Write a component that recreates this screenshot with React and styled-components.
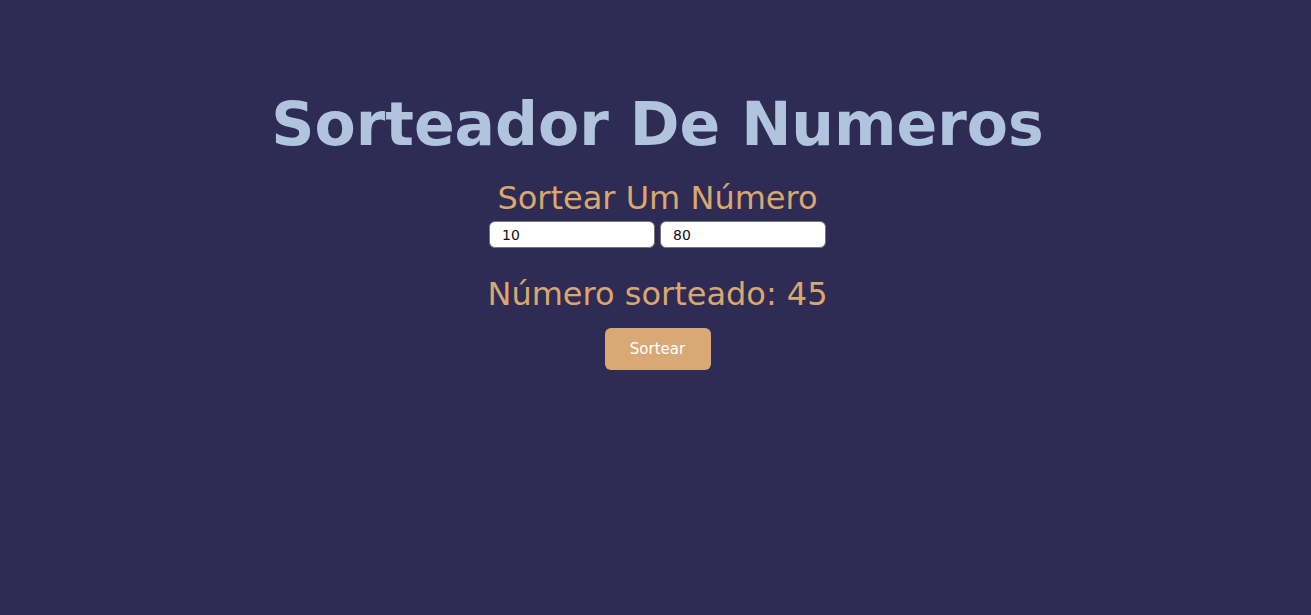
import styled, { createGlobalStyle } from "styled-components";

const GlobalStyle = createGlobalStyle`
  body {
    margin: 0;
    background: #2e2b54;
    font-family: "DejaVu Sans", "Open Sans", sans-serif;
  }
`;

const Page = styled.main`
  min-height: 100vh;
  display: flex;
  flex-direction: column;
  align-items: center;
  padding-top: 84px;
  padding-left: 4px;
  box-sizing: border-box;
`;

const Title = styled.h1`
  margin: 0;
  color: #b0c4de;
  font-size: 60px;
  font-weight: 700;
  line-height: 80px;
`;

const Subtitle = styled.h2`
  margin: 14px 0 0;
  color: #d9a76f;
  font-size: 32px;
  font-weight: 400;
  line-height: 40px;
`;

const Inputs = styled.div`
  display: flex;
  gap: 5px;
  margin-top: 3px;
`;

const Field = styled.input`
  width: 166px;
  height: 27px;
  box-sizing: border-box;
  border: 1px solid #767676;
  border-radius: 6px;
  padding: 0 12px;
  font-family: inherit;
  font-size: 14px;
  color: #111;
  background: #fff;
`;

const Result = styled.p`
  margin: 26px 0 0;
  color: #d9a76f;
  font-size: 32px;
  line-height: 40px;
`;

const Button = styled.button`
  margin-top: 14px;
  width: 106px;
  height: 42px;
  border: none;
  border-radius: 6px;
  background: #d9a975;
  color: #fff;
  font-family: inherit;
  font-size: 15px;
  cursor: pointer;
`;

const App = () => {
  return (
    <>
      <GlobalStyle />
      <Page>
        <Title>Sorteador De Numeros</Title>
        <Subtitle>Sortear Um Número</Subtitle>
        <Inputs>
          <Field type="number" defaultValue="10" />
          <Field type="number" defaultValue="80" />
        </Inputs>
        <Result>Número sorteado: 45</Result>
        <Button>Sortear</Button>
      </Page>
    </>
  );
};

export default App;
